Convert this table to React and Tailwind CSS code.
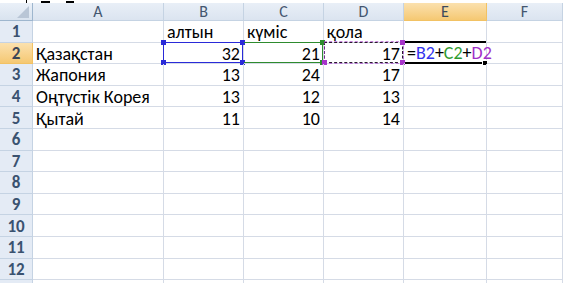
import React from "react";

const cols = [
  { key: "A", w: "w-[131px]" },
  { key: "B", w: "w-[80px]" },
  { key: "C", w: "w-[80px]" },
  { key: "D", w: "w-[80px]" },
  { key: "E", w: "w-[83px]" },
  { key: "F", w: "flex-1" },
];

const data = {
  1: { B: "алтын", C: "күміс", D: "қола" },
  2: { A: "Қазақстан", B: "32", C: "21", D: "17" },
  3: { A: "Жапония", B: "13", C: "24", D: "17" },
  4: { A: "Оңтүстік Корея", B: "13", C: "12", D: "13" },
  5: { A: "Қытай", B: "11", C: "10", D: "14" },
};

const font = { fontFamily: "Calibri, Carlito, 'Noto Sans', 'Open Sans', sans-serif" };

function Handle({ className }) {
  return <span className={`absolute w-[5px] h-[5px] ${className}`} />;
}

// Coloured range frames drawn over the cells referenced by the formula in E2
function RangeFrame({ col }) {
  if (col === "B")
    return (
      <div className="absolute -left-[1px] -top-[1px] right-0 bottom-0 border-[1.5px] border-[#2a2ad8]">
        <Handle className="-left-[3px] -top-[3px] bg-[#2a2ad8]" />
        <Handle className="-right-[3px] -top-[3px] bg-[#2a2ad8]" />
        <Handle className="-left-[3px] -bottom-[3px] bg-[#2a2ad8]" />
        <Handle className="-right-[3px] -bottom-[3px] bg-[#2a2ad8]" />
      </div>
    );
  if (col === "C")
    return (
      <div className="absolute left-0 -top-[1px] right-0 bottom-0 border-y-[1.5px] border-r-[1.5px] border-[#2e8b2e]">
        <Handle className="-right-[3px] -top-[3px] bg-[#2e8b2e]" />
        <Handle className="-right-[3px] -bottom-[3px] bg-[#2e8b2e]" />
      </div>
    );
  if (col === "D")
    return (
      <div className="absolute left-0 -top-[1px] right-0 bottom-0 border-[1.5px] border-dashed border-[#2b1b30]">
        <div className="absolute -inset-[1.5px] border-[1.5px] border-dashed border-[#a634c9] opacity-60" />
        <Handle className="-right-[3px] -top-[3px] bg-[#a634c9]" />
        <Handle className="-right-[3px] -bottom-[3px] bg-[#a634c9]" />
        <Handle className="-left-[3px] -bottom-[3px] bg-[#a634c9]" />
      </div>
    );
  return null;
}

function FormulaCell() {
  return (
    <div className="absolute left-[1px] -top-[2px] right-0 -bottom-[1px] border-y-2 border-black flex items-center pl-[2px] pt-[2px]">
      <span className="text-black">=</span>
      <span className="text-[#3333ee]">B2</span>
      <span className="text-black">+</span>
      <span className="text-[#2e9b2e]">C2</span>
      <span className="text-black">+</span>
      <span className="text-[#a030c8]">D2</span>
      <span className="absolute -right-[2px] -bottom-[4px] w-[6px] h-[6px] bg-black border border-white" />
    </div>
  );
}

export default function App() {
  const rows = Array.from({ length: 13 }, (_, i) => i + 1);
  return (
    <div className="w-[563px] h-[283px] overflow-hidden bg-white text-[18px] leading-none" style={font}>
      {/* strip above the sheet */}
      <div className="h-[3px] bg-white flex items-end">
        <span className="ml-[26px] w-[1px] h-[3px] bg-black" />
        <span className="ml-[14px] w-[9px] h-[2px] bg-black" />
        <span className="ml-[16px] w-[8px] h-[2px] bg-black" />
      </div>
      {/* column headers */}
      <div className="flex h-[18px]">
        <div className="relative w-[33px] shrink-0 border-r border-b border-[#9eb6ce] bg-gradient-to-b from-[#eaf0f8] to-[#d9e3ef]">
          <span
            className="absolute right-[3px] bottom-[2px] w-[12px] h-[12px] bg-[#b9c6d6]"
            style={{ clipPath: "polygon(100% 0, 100% 100%, 0 100%)" }}
          />
        </div>
        {cols.map((c) => (
          <div
            key={c.key}
            className={`${c.w} shrink-0 flex items-center justify-center border-r border-b text-[16px] ${
              c.key === "E"
                ? "border-[#f2c264] bg-gradient-to-b from-[#fbe1ae] to-[#f5c872] text-[#3d4a5c]"
                : "border-[#c5d3e3] bg-gradient-to-b from-[#e9eff7] to-[#dbe4f0] text-[#44566f]"
            }`}
          >
            {c.key}
          </div>
        ))}
      </div>
      {rows.map((r) => (
        <div key={r} className="flex h-[21.6px]">
          <div
            className={`w-[33px] shrink-0 flex items-center justify-center border-r border-b font-semibold text-[17px] pt-[1px] ${
              r === 2
                ? "border-[#f2c264] bg-gradient-to-b from-[#fbe1ae] to-[#f5c872] text-[#3b4657]"
                : "border-[#c5d3e3] bg-[#e4ebf5] text-[#3a5270]"
            }`}
          >
            {r < 13 ? r : ""}
          </div>
          {cols.map((c) => {
            const v = data[r] && data[r][c.key];
            const num = v && /^\d+$/.test(v);
            return (
              <div
                key={c.key}
                className={`relative ${c.w} shrink-0 flex items-center border-r border-b border-[#d5dbe6] px-[3px] pt-[2px] text-black ${
                  num ? "justify-end" : "justify-start"
                }`}
              >
                {v}
                {r === 2 && <RangeFrame col={c.key} />}
                {r === 2 && c.key === "E" && <FormulaCell />}
              </div>
            );
          })}
        </div>
      ))}
    </div>
  );
}
